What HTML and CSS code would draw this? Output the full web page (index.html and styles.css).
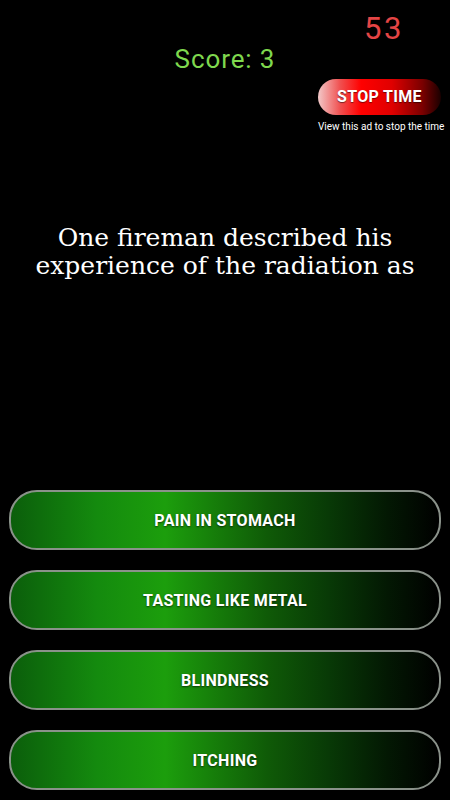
FILE: index.html
```html
<!DOCTYPE html>
<html>
<head>
<meta charset="utf-8">
<link rel="stylesheet" href="styles.css">
</head>
<body>
<div class="screen">
  <div class="top">
    <div class="timer">53</div>
    <div class="score">Score: 3</div>
    <div class="stop">
      <div class="stop-btn">STOP TIME</div>
      <div class="stop-note">View this ad to stop the time</div>
    </div>
  </div>
  <div class="question">One fireman described his experience of the radiation as</div>
  <div class="answers">
    <div class="answer">PAIN IN STOMACH</div>
    <div class="answer">TASTING LIKE METAL</div>
    <div class="answer">BLINDNESS</div>
    <div class="answer">ITCHING</div>
  </div>
</div>
</body>
</html>
```
FILE: styles.css
```css
html, body {
  margin: 0;
  padding: 0;
  background: #000;
}
.screen {
  width: 450px;
  height: 800px;
  background: #000;
  display: flex;
  flex-direction: column;
  font-family: Roboto, "Liberation Sans", sans-serif;
}
.top {
  position: relative;
  height: 140px;
}
.timer {
  position: absolute;
  left: 364px;
  top: 12px;
  color: #e44545;
  font-size: 31px;
  line-height: 34px;
  letter-spacing: 2.5px;
}
.score {
  position: absolute;
  left: 0;
  right: 0;
  top: 43px;
  text-align: center;
  color: #7fd84e;
  font-size: 26px;
  line-height: 32px;
  letter-spacing: 0.9px;
}
.stop {
  position: absolute;
  left: 318px;
  top: 79px;
  display: flex;
  flex-direction: column;
  align-items: flex-start;
}
.stop-btn {
  width: 123px;
  height: 36px;
  border-radius: 18px;
  background: linear-gradient(90deg, #f2c8c8 0%, #f05050 18%, #ff0000 35%, #e00000 60%, #7a0000 85%, #1a0000 100%);
  color: #fff;
  font-weight: bold;
  font-size: 16px;
  line-height: 36px;
  text-align: center;
  letter-spacing: 0.3px;
  text-shadow: 0 1px 1px rgba(0,0,0,0.5);
}
.stop-note {
  margin-top: 6px;
  color: #fff;
  font-size: 10px;
  line-height: 12px;
  white-space: nowrap;
}
.question {
  margin-top: 84px;
  padding: 0 30px;
  text-align: center;
  color: #fff;
  font-family: "DejaVu Serif", serif;
  font-size: 25px;
  line-height: 28px;
  height: 266px;
}
.answers {
  display: flex;
  flex-direction: column;
  gap: 20px;
  padding: 0 9px;
}
.answer {
  height: 56px;
  border: 2px solid #8a928a;
  border-radius: 28px;
  background: linear-gradient(90deg, #0b5e0b 0%, #148a0e 20%, #1c9e0c 36%, #0f5a07 60%, #083a06 74%, #031803 88%, #000 100%);
  color: #fff;
  font-weight: bold;
  font-size: 16px;
  letter-spacing: 0.3px;
  display: flex;
  align-items: center;
  justify-content: center;
  text-shadow: 0 1px 2px rgba(0,0,0,0.6);
}
```
